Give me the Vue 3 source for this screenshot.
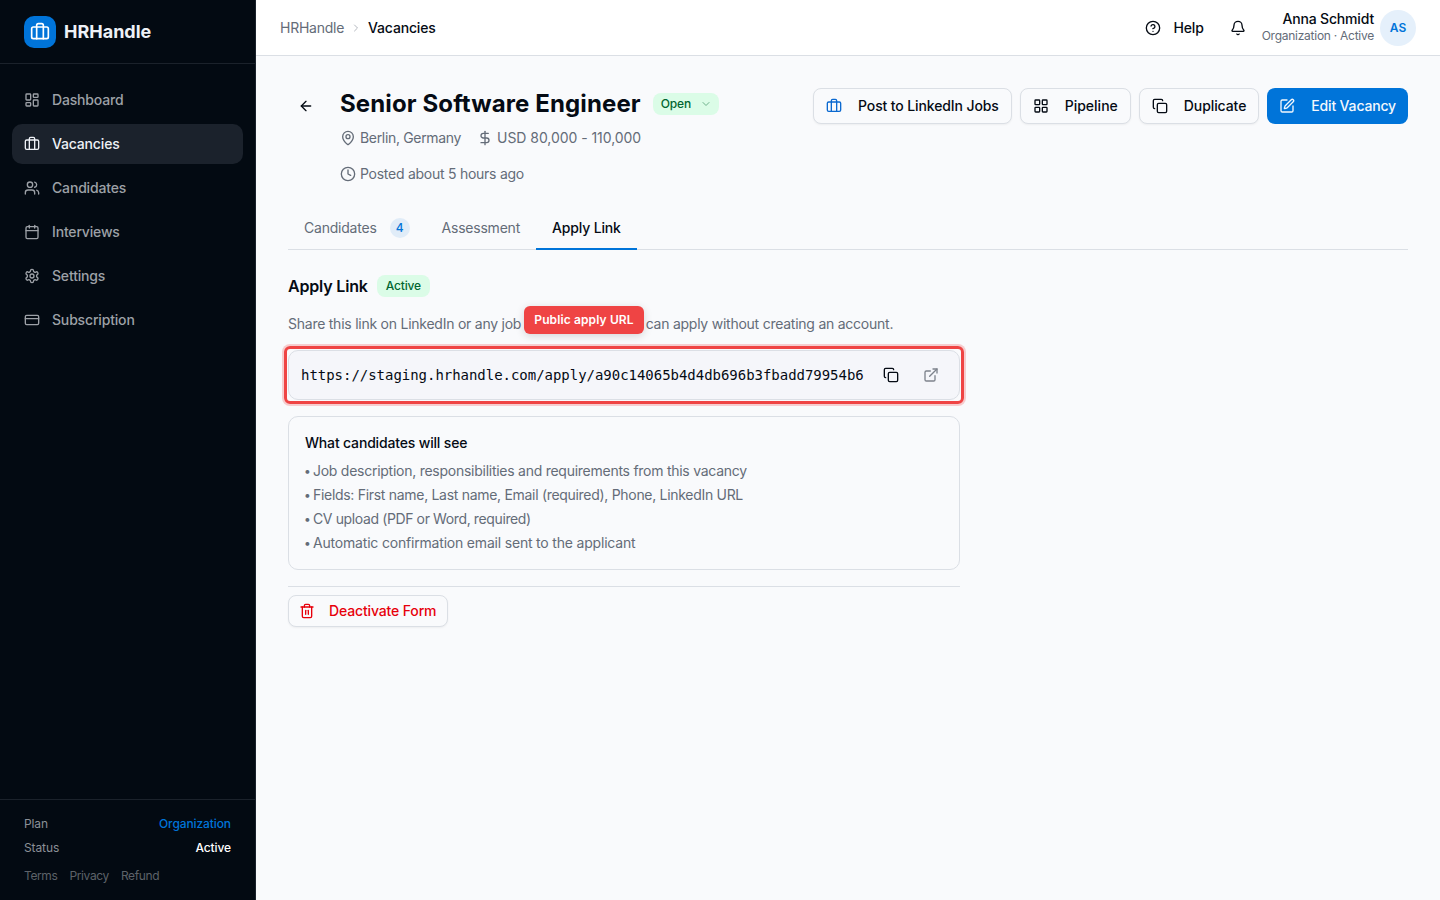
<script setup>
import { ref } from 'vue'

// 24x24 stroke icons, each one a list of path strings
const icons = {
  briefcase: [
    'M16 20V4a2 2 0 0 0-2-2h-4a2 2 0 0 0-2 2v16',
    'M4 6h16a2 2 0 0 1 2 2v10a2 2 0 0 1-2 2H4a2 2 0 0 1-2-2V8a2 2 0 0 1 2-2z',
  ],
  dashboard: [
    'M4 3h5a1 1 0 0 1 1 1v7a1 1 0 0 1-1 1H4a1 1 0 0 1-1-1V4a1 1 0 0 1 1-1z',
    'M15 3h5a1 1 0 0 1 1 1v3a1 1 0 0 1-1 1h-5a1 1 0 0 1-1-1V4a1 1 0 0 1 1-1z',
    'M15 12h5a1 1 0 0 1 1 1v7a1 1 0 0 1-1 1h-5a1 1 0 0 1-1-1v-7a1 1 0 0 1 1-1z',
    'M4 16h5a1 1 0 0 1 1 1v3a1 1 0 0 1-1 1H4a1 1 0 0 1-1-1v-3a1 1 0 0 1 1-1z',
  ],
  grid: [
    'M4 3h5a1 1 0 0 1 1 1v5a1 1 0 0 1-1 1H4a1 1 0 0 1-1-1V4a1 1 0 0 1 1-1z',
    'M15 3h5a1 1 0 0 1 1 1v5a1 1 0 0 1-1 1h-5a1 1 0 0 1-1-1V4a1 1 0 0 1 1-1z',
    'M15 14h5a1 1 0 0 1 1 1v5a1 1 0 0 1-1 1h-5a1 1 0 0 1-1-1v-5a1 1 0 0 1 1-1z',
    'M4 14h5a1 1 0 0 1 1 1v5a1 1 0 0 1-1 1H4a1 1 0 0 1-1-1v-5a1 1 0 0 1 1-1z',
  ],
  users: [
    'M16 21v-2a4 4 0 0 0-4-4H6a4 4 0 0 0-4 4v2',
    'M9 3a4 4 0 1 0 0 8a4 4 0 1 0 0-8z',
    'M22 21v-2a4 4 0 0 0-3-3.87',
    'M16 3.13a4 4 0 0 1 0 7.75',
  ],
  calendar: [
    'M8 2v4',
    'M16 2v4',
    'M5 4h14a2 2 0 0 1 2 2v14a2 2 0 0 1-2 2H5a2 2 0 0 1-2-2V6a2 2 0 0 1 2-2z',
    'M3 10h18',
  ],
  settings: [
    'M12.22 2h-.44a2 2 0 0 0-2 2v.18a2 2 0 0 1-1 1.73l-.43.25a2 2 0 0 1-2 0l-.15-.08a2 2 0 0 0-2.73.73l-.22.38a2 2 0 0 0 .73 2.73l.15.1a2 2 0 0 1 1 1.72v.51a2 2 0 0 1-1 1.74l-.15.09a2 2 0 0 0-.73 2.73l.22.38a2 2 0 0 0 2.73.73l.15-.08a2 2 0 0 1 2 0l.43.25a2 2 0 0 1 1 1.73V20a2 2 0 0 0 2 2h.44a2 2 0 0 0 2-2v-.18a2 2 0 0 1 1-1.73l.43-.25a2 2 0 0 1 2 0l.15.08a2 2 0 0 0 2.73-.73l.22-.39a2 2 0 0 0-.73-2.73l-.15-.08a2 2 0 0 1-1-1.74v-.5a2 2 0 0 1 1-1.74l.15-.09a2 2 0 0 0 .73-2.73l-.22-.38a2 2 0 0 0-2.73-.73l-.15.08a2 2 0 0 1-2 0l-.43-.25a2 2 0 0 1-1-1.73V4a2 2 0 0 0-2-2z',
    'M12 9a3 3 0 1 0 0 6a3 3 0 1 0 0-6z',
  ],
  card: [
    'M4 5h16a2 2 0 0 1 2 2v10a2 2 0 0 1-2 2H4a2 2 0 0 1-2-2V7a2 2 0 0 1 2-2z',
    'M2 10h20',
  ],
  chevronRight: ['m9 18 6-6-6-6'],
  chevronDown: ['m6 9 6 6 6-6'],
  help: [
    'M12 2a10 10 0 1 0 0 20a10 10 0 1 0 0-20z',
    'M9.09 9a3 3 0 0 1 5.83 1c0 2-3 3-3 3',
    'M12 17h.01',
  ],
  bell: [
    'M10.268 21a2 2 0 0 0 3.464 0',
    'M3.262 15.326A1 1 0 0 0 4 17h16a1 1 0 0 0 .74-1.673C19.41 13.956 18 12.499 18 8A6 6 0 0 0 6 8c0 4.499-1.411 5.956-2.738 7.326',
  ],
  arrowLeft: ['m12 19-7-7 7-7', 'M19 12H5'],
  pin: [
    'M20 10c0 4.993-5.539 10.193-7.399 11.799a1 1 0 0 1-1.202 0C9.539 20.193 4 14.993 4 10a8 8 0 0 1 16 0',
    'M12 7a3 3 0 1 0 0 6a3 3 0 1 0 0-6z',
  ],
  dollar: ['M12 2v20', 'M17 5H9.5a3.5 3.5 0 0 0 0 7h5a3.5 3.5 0 0 1 0 7H6'],
  clock: ['M12 2a10 10 0 1 0 0 20a10 10 0 1 0 0-20z', 'M12 6v6l4 2'],
  copy: [
    'M10 8h10a2 2 0 0 1 2 2v10a2 2 0 0 1-2 2H10a2 2 0 0 1-2-2V10a2 2 0 0 1 2-2z',
    'M4 16c-1.1 0-2-.9-2-2V4c0-1.1.9-2 2-2h10c1.1 0 2 .9 2 2',
  ],
  edit: [
    'M12 3H5a2 2 0 0 0-2 2v14a2 2 0 0 0 2 2h14a2 2 0 0 0 2-2v-7',
    'M18.375 2.625a1 1 0 0 1 3 3l-9.013 9.014a2 2 0 0 1-.853.505l-2.873.84a.5.5 0 0 1-.62-.62l.84-2.873a2 2 0 0 1 .506-.852z',
  ],
  external: ['M15 3h6v6', 'M10 14 21 3', 'M18 13v6a2 2 0 0 1-2 2H5a2 2 0 0 1-2-2V8a2 2 0 0 1 2-2h6'],
  trash: [
    'M3 6h18',
    'M19 6v14c0 1-1 2-2 2H7c-1 0-2-1-2-2V6',
    'M8 6V4c0-1 1-2 2-2h4c1 0 2 1 2 2v2',
    'M10 11v6',
    'M14 11v6',
  ],
}

const navItems = [
  { label: 'Dashboard', icon: 'dashboard' },
  { label: 'Vacancies', icon: 'briefcase' },
  { label: 'Candidates', icon: 'users' },
  { label: 'Interviews', icon: 'calendar' },
  { label: 'Settings', icon: 'settings' },
  { label: 'Subscription', icon: 'card' },
]

const meta = [
  { label: 'Berlin, Germany', icon: 'pin' },
  { label: 'USD 80,000 - 110,000', icon: 'dollar' },
  { label: 'Posted about 5 hours ago', icon: 'clock' },
]

const actions = [
  { label: 'Post to LinkedIn Jobs', icon: 'briefcase', kind: 'linkedin' },
  { label: 'Pipeline', icon: 'grid', kind: 'pipeline' },
  { label: 'Duplicate', icon: 'copy', kind: 'duplicate' },
  { label: 'Edit Vacancy', icon: 'edit', kind: 'primary' },
]

const tabs = [
  { label: 'Candidates', count: 4 },
  { label: 'Assessment' },
  { label: 'Apply Link' },
]

const candidateNotes = [
  'Job description, responsibilities and requirements from this vacancy',
  'Fields: First name, Last name, Email (required), Phone, LinkedIn URL',
  'CV upload (PDF or Word, required)',
  'Automatic confirmation email sent to the applicant',
]

const activeNav = ref('Vacancies')
const activeTab = ref('Apply Link')
const applyUrl = 'https://staging.hrhandle.com/apply/a90c14065b4d4db696b3fbadd79954b6'
</script>

<template>
  <div class="app">
    <aside class="sidebar">
      <div class="brand">
        <div class="brand-logo">
          <svg class="icon icon-lg" viewBox="0 0 24 24">
            <path v-for="d in icons.briefcase" :key="d" :d="d" />
          </svg>
        </div>
        <span class="brand-name">HRHandle</span>
      </div>
      <nav class="nav">
        <a
          v-for="item in navItems"
          :key="item.label"
          class="nav-item"
          :class="{ active: item.label === activeNav }"
          @click="activeNav = item.label"
        >
          <svg class="icon" viewBox="0 0 24 24">
            <path v-for="d in icons[item.icon]" :key="d" :d="d" />
          </svg>
          <span>{{ item.label }}</span>
        </a>
      </nav>
      <div class="sidebar-footer">
        <div class="plan-row">
          <span>Plan</span>
          <span class="plan-name">Organization</span>
        </div>
        <div class="plan-row">
          <span>Status</span>
          <span class="plan-status">Active</span>
        </div>
        <div class="legal">
          <a>Terms</a>
          <a>Privacy</a>
          <a>Refund</a>
        </div>
      </div>
    </aside>

    <div class="main">
      <header class="topbar">
        <div class="breadcrumb">
          <span>HRHandle</span>
          <svg class="icon icon-sm" viewBox="0 0 24 24">
            <path :d="icons.chevronRight[0]" />
          </svg>
          <span class="current">Vacancies</span>
        </div>
        <div class="topbar-right">
          <button class="help">
            <svg class="icon" viewBox="0 0 24 24">
              <path v-for="d in icons.help" :key="d" :d="d" />
            </svg>
            <span>Help</span>
          </button>
          <svg class="icon bell" viewBox="0 0 24 24">
            <path v-for="d in icons.bell" :key="d" :d="d" />
          </svg>
          <div class="user">
            <div class="user-name">Anna Schmidt</div>
            <div class="user-plan">Organization · Active</div>
          </div>
          <div class="avatar">AS</div>
        </div>
      </header>

      <main class="content">
        <section class="page-head">
          <button class="back">
            <svg class="icon" viewBox="0 0 24 24">
              <path v-for="d in icons.arrowLeft" :key="d" :d="d" />
            </svg>
          </button>
          <div class="heading">
            <div class="title-row">
              <h1>Senior Software Engineer</h1>
              <span class="badge status">
                Open
                <svg class="icon icon-sm" viewBox="0 0 24 24">
                  <path :d="icons.chevronDown[0]" />
                </svg>
              </span>
            </div>
            <div class="meta">
              <span v-for="item in meta" :key="item.label" class="meta-item" :class="item.icon">
                <svg class="icon" viewBox="0 0 24 24">
                  <path v-for="d in icons[item.icon]" :key="d" :d="d" />
                </svg>
                {{ item.label }}
              </span>
            </div>
          </div>
          <div class="actions">
            <button v-for="action in actions" :key="action.label" class="btn" :class="action.kind">
              <svg class="icon" viewBox="0 0 24 24">
                <path v-for="d in icons[action.icon]" :key="d" :d="d" />
              </svg>
              <span>{{ action.label }}</span>
            </button>
          </div>
        </section>

        <div class="tabs">
          <button
            v-for="tab in tabs"
            :key="tab.label"
            class="tab"
            :class="{ active: tab.label === activeTab }"
            @click="activeTab = tab.label"
          >
            <span>{{ tab.label }}</span>
            <span v-if="tab.count" class="count">{{ tab.count }}</span>
          </button>
        </div>

        <section class="apply">
          <div class="apply-head">
            <h2>Apply Link</h2>
            <span class="badge">Active</span>
          </div>
          <p class="apply-text">
            Share this link on LinkedIn or any job board. Candidates can apply without creating an account.
          </p>
          <div class="url-box">
            <code>{{ applyUrl }}</code>
            <button class="icon-btn">
              <svg class="icon" viewBox="0 0 24 24">
                <path v-for="d in icons.copy" :key="d" :d="d" />
              </svg>
            </button>
            <button class="icon-btn muted">
              <svg class="icon" viewBox="0 0 24 24">
                <path v-for="d in icons.external" :key="d" :d="d" />
              </svg>
            </button>
            <div class="highlight"></div>
            <div class="highlight-label">Public apply URL</div>
          </div>
          <div class="notes">
            <h3>What candidates will see</h3>
            <ul>
              <li v-for="note in candidateNotes" :key="note">
                <span class="bullet">•</span>{{ note }}
              </li>
            </ul>
          </div>
          <div class="danger-zone">
            <button class="btn danger">
              <svg class="icon" viewBox="0 0 24 24">
                <path v-for="d in icons.trash" :key="d" :d="d" />
              </svg>
              <span>Deactivate Form</span>
            </button>
          </div>
        </section>
      </main>
    </div>
  </div>
</template>

<style>
body {
  margin: 0;
}
</style>

<style scoped>
.app {
  display: flex;
  height: 100vh;
  overflow: hidden;
  background: #f9fafc;
  color: #050b14;
  font-family: Inter, sans-serif;
  font-size: 14px;
  line-height: 20px;
  letter-spacing: -0.17px;
}

.app * {
  box-sizing: border-box;
}

h1,
h2,
h3,
p,
ul {
  margin: 0;
  padding: 0;
}

button {
  font: inherit;
  color: inherit;
  letter-spacing: inherit;
  background: none;
  border: none;
  padding: 0;
  cursor: pointer;
}

.icon {
  width: 16px;
  height: 16px;
  flex-shrink: 0;
  fill: none;
  stroke: currentColor;
  stroke-width: 2;
  stroke-linecap: round;
  stroke-linejoin: round;
}

.icon-lg {
  width: 20px;
  height: 20px;
}

.icon-sm {
  width: 12px;
  height: 12px;
}

/* Sidebar */
.sidebar {
  width: 256px;
  flex-shrink: 0;
  display: flex;
  flex-direction: column;
  background: #030a12;
  border-right: 1px solid #1b222b;
}

.brand {
  height: 64px;
  display: flex;
  align-items: center;
  gap: 8px;
  padding: 0 24px;
  border-bottom: 1px solid #1b222b;
}

.brand-logo {
  width: 32px;
  height: 32px;
  display: flex;
  align-items: center;
  justify-content: center;
  border-radius: 10px;
  background: #0074d9;
  color: #fff;
}

.brand-name {
  font-size: 18px;
  font-weight: 700;
  letter-spacing: 0;
  color: #eef1f6;
}

.nav {
  flex: 1;
  display: flex;
  flex-direction: column;
  gap: 4px;
  padding: 16px 12px;
}

.nav-item {
  height: 40px;
  display: flex;
  align-items: center;
  gap: 12px;
  padding: 0 12px;
  border-radius: 10px;
  font-weight: 500;
  color: #9da1a7;
}

.nav-item.active {
  background: #1b222c;
  color: #eef1f6;
}

.sidebar-footer {
  display: flex;
  flex-direction: column;
  gap: 8px;
  height: 101px;
  padding: 16px 24px 0;
  border-top: 1px solid #1b222b;
  font-size: 12px;
  line-height: 16px;
  letter-spacing: -0.1px;
  color: #8b9097;
}

.plan-row {
  display: flex;
  justify-content: space-between;
}

.plan-name {
  font-weight: 500;
  color: #0074d9;
}

.plan-status {
  font-weight: 500;
  color: #fff;
}

.legal {
  display: flex;
  gap: 12px;
  padding-top: 4px;
  letter-spacing: -0.38px;
  color: #5d6269;
}

/* Top bar */
.main {
  flex: 1;
  min-width: 0;
}

.topbar {
  height: 56px;
  display: flex;
  align-items: center;
  justify-content: space-between;
  padding: 0 24px;
  background: #fff;
  border-bottom: 1px solid #dbdfe5;
}

.breadcrumb {
  display: flex;
  align-items: center;
  gap: 6px;
  letter-spacing: -0.25px;
  color: #646c78;
}

.breadcrumb .icon {
  color: #b4b8bf;
}

.breadcrumb .current {
  font-weight: 500;
  letter-spacing: -0.17px;
  color: #050b14;
}

.topbar-right {
  display: flex;
  align-items: center;
}

.help {
  display: flex;
  align-items: center;
  gap: 13px;
  font-weight: 500;
}

.bell {
  margin: 0 16px 0 26px;
}

.user {
  padding-bottom: 2px;
  text-align: right;
  font-weight: 500;
}

.user-name {
  line-height: 18px;
}

.user-plan {
  font-size: 12px;
  font-weight: 400;
  line-height: 15px;
  letter-spacing: -0.26px;
  color: #646c78;
}

.avatar {
  width: 36px;
  height: 36px;
  display: flex;
  align-items: center;
  justify-content: center;
  margin-left: 6px;
  border-radius: 50%;
  background: #e5f0fb;
  color: #0074d9;
  font-size: 12px;
  font-weight: 600;
  letter-spacing: 0;
}

/* Page head */
.content {
  padding: 32px;
}

.page-head {
  display: flex;
  align-items: flex-start;
}

.back {
  width: 36px;
  height: 36px;
  display: flex;
  align-items: center;
  justify-content: center;
  margin-right: 16px;
}

.heading {
  width: 400px;
}

.title-row {
  display: flex;
  align-items: center;
  gap: 12px;
}

h1 {
  font-size: 24px;
  font-weight: 700;
  line-height: 32px;
  letter-spacing: 0.12px;
  white-space: nowrap;
}

.badge {
  height: 22px;
  display: inline-flex;
  align-items: center;
  padding: 0 9px;
  border-radius: 8px;
  background: #dbfce7;
  color: #016630;
  font-size: 12px;
  font-weight: 500;
}

.status {
  gap: 9px;
  padding: 0 7px 0 8px;
}

.status .icon {
  opacity: 0.5;
}

.meta {
  display: flex;
  flex-wrap: wrap;
  gap: 16px;
  margin-top: 8px;
  color: #646c78;
}

.meta-item {
  display: flex;
  align-items: center;
  gap: 4px;
  letter-spacing: -0.26px;
}

.meta-item.pin {
  letter-spacing: -0.33px;
}

.meta-item.dollar {
  letter-spacing: -0.05px;
}

.actions {
  display: flex;
  gap: 8px;
  margin-left: auto;
}

.btn {
  height: 36px;
  display: inline-flex;
  align-items: center;
  gap: 16px;
  padding: 0 12px;
  border: 1px solid #dbdfe5;
  border-radius: 8px;
  background: #f9fafc;
  box-shadow: 0 1px 2px rgba(0, 0, 0, 0.05);
  font-weight: 500;
  letter-spacing: -0.08px;
  white-space: nowrap;
}

.btn.linkedin {
  letter-spacing: -0.12px;
}

.linkedin .icon {
  color: #0b69d0;
}

.btn.pipeline {
  letter-spacing: 0;
}

.btn.primary {
  border: none;
  background: #0074d9;
  box-shadow: none;
  color: #f4f8fd;
  letter-spacing: -0.17px;
}

/* Tabs */
.tabs {
  display: flex;
  height: 42px;
  margin-top: 24px;
  box-shadow: inset 0 -1px #dbdfe5;
}

.tab {
  display: flex;
  align-items: center;
  padding: 0 16px;
  border-bottom: 2px solid transparent;
  color: #646c78;
  letter-spacing: -0.22px;
}

.tab.active {
  border-color: #0074d9;
  color: #050b14;
  font-weight: 500;
  letter-spacing: -0.17px;
}

.count {
  width: 20px;
  height: 20px;
  margin-left: 13px;
  border-radius: 50%;
  background: #e0ecf8;
  color: #0074d9;
  font-size: 12px;
  font-weight: 500;
  line-height: 20px;
}

/* Apply link */
.apply {
  width: 672px;
  display: flex;
  flex-direction: column;
  gap: 16px;
  margin-top: 24px;
}

.apply-head {
  display: flex;
  align-items: center;
  gap: 9px;
  height: 24px;
}

h2 {
  font-size: 16px;
  font-weight: 600;
}

.apply-text {
  color: #646c78;
  letter-spacing: -0.245px;
  white-space: nowrap;
}

.url-box {
  position: relative;
  height: 50px;
  display: flex;
  align-items: center;
  padding: 0 12px;
  border: 1px solid #dbdfe5;
  border-radius: 10px;
  background: #f5f6fa;
}

code {
  flex: 1;
  font-family: 'DejaVu Sans Mono', monospace;
  font-size: 14px;
  letter-spacing: -0.03px;
}

.icon-btn {
  width: 32px;
  height: 32px;
  display: flex;
  align-items: center;
  justify-content: center;
  margin-left: 8px;
}

.icon-btn.muted {
  color: #7d838c;
}

.highlight {
  position: absolute;
  inset: -5px;
  border: 3px solid #ef4444;
  border-radius: 6px;
  box-shadow: 0 0 0 2px rgba(239, 68, 68, 0.25);
}

.highlight-label {
  position: absolute;
  top: -45px;
  left: 235px;
  width: 120px;
  height: 28px;
  border-radius: 6px;
  background: #ef4444;
  box-shadow: 0 2px 8px rgba(0, 0, 0, 0.15);
  color: #fff;
  font-size: 12px;
  font-weight: 600;
  line-height: 28px;
  letter-spacing: 0.12px;
  text-align: center;
  white-space: nowrap;
}

.notes {
  padding: 16px;
  border: 1px solid #dbdfe5;
  border-radius: 10px;
}

h3 {
  font-size: 14px;
  font-weight: 500;
}

.notes ul {
  display: flex;
  flex-direction: column;
  gap: 4px;
  margin-top: 8px;
  list-style: none;
  color: #646c78;
}

.notes li {
  display: flex;
  letter-spacing: -0.26px;
}

.notes li:nth-child(2) {
  letter-spacing: -0.3px;
}

.notes li:nth-child(3) {
  letter-spacing: -0.38px;
}

.notes li:nth-child(4) {
  letter-spacing: -0.19px;
}

.bullet {
  width: 9px;
  margin-left: -1px;
  font-size: 12px;
}

.danger-zone {
  padding-top: 8px;
  border-top: 1px solid #dbdfe5;
}

.btn.danger {
  height: 32px;
  gap: 14px;
  padding: 0 11px 0 10px;
  color: #e7000b;
  letter-spacing: -0.14px;
}
</style>
